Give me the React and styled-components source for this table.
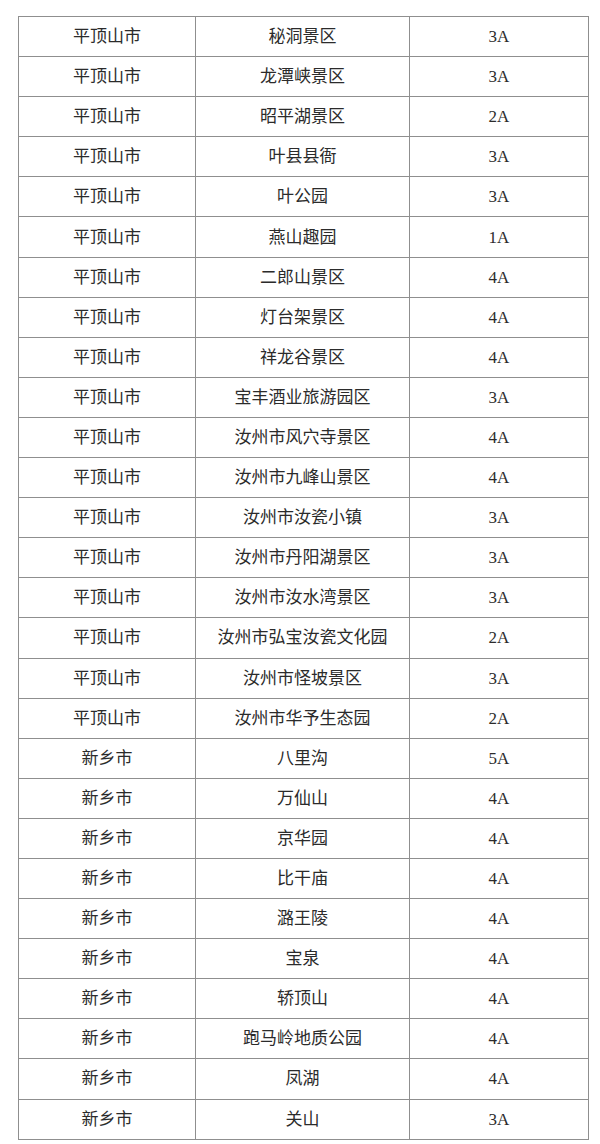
import React from 'react'
import styled, { createGlobalStyle } from 'styled-components'

const GlobalStyle = createGlobalStyle`
  html, body {
    margin: 0;
    padding: 0;
    background: #fff;
  }
`

const Page = styled.div`
  padding: 16px 0 0 18px;
  font-family: "Liberation Serif", "Noto Sans CJK SC", serif;
  color: #2b2b2b;
`

const Table = styled.table`
  border-collapse: collapse;
  table-layout: fixed;
  width: 570px;
`

const Col = styled.col`
  width: ${(p) => p.$w}px;
`

const Row = styled.tr`
  height: 40.1px;
`

const Cell = styled.td`
  border: 1px solid #8f8f8f;
  text-align: center;
  vertical-align: middle;
  font-size: 17px;
  padding: 0;
  line-height: 1;
`

const rows = [
  ['平顶山市', '秘洞景区', '3A'],
  ['平顶山市', '龙潭峡景区', '3A'],
  ['平顶山市', '昭平湖景区', '2A'],
  ['平顶山市', '叶县县衙', '3A'],
  ['平顶山市', '叶公园', '3A'],
  ['平顶山市', '燕山趣园', '1A'],
  ['平顶山市', '二郎山景区', '4A'],
  ['平顶山市', '灯台架景区', '4A'],
  ['平顶山市', '祥龙谷景区', '4A'],
  ['平顶山市', '宝丰酒业旅游园区', '3A'],
  ['平顶山市', '汝州市风穴寺景区', '4A'],
  ['平顶山市', '汝州市九峰山景区', '4A'],
  ['平顶山市', '汝州市汝瓷小镇', '3A'],
  ['平顶山市', '汝州市丹阳湖景区', '3A'],
  ['平顶山市', '汝州市汝水湾景区', '3A'],
  ['平顶山市', '汝州市弘宝汝瓷文化园', '2A'],
  ['平顶山市', '汝州市怪坡景区', '3A'],
  ['平顶山市', '汝州市华予生态园', '2A'],
  ['新乡市', '八里沟', '5A'],
  ['新乡市', '万仙山', '4A'],
  ['新乡市', '京华园', '4A'],
  ['新乡市', '比干庙', '4A'],
  ['新乡市', '潞王陵', '4A'],
  ['新乡市', '宝泉', '4A'],
  ['新乡市', '轿顶山', '4A'],
  ['新乡市', '跑马岭地质公园', '4A'],
  ['新乡市', '凤湖', '4A'],
  ['新乡市', '关山', '3A'],
]

export default function App() {
  return (
    <>
      <GlobalStyle />
      <Page>
        <Table>
          <colgroup>
            <Col $w={177} />
            <Col $w={214} />
            <Col $w={179} />
          </colgroup>
          <tbody>
            {rows.map(([city, spot, level], i) => (
              <Row key={i}>
                <Cell>{city}</Cell>
                <Cell>{spot}</Cell>
                <Cell>{level}</Cell>
              </Row>
            ))}
          </tbody>
        </Table>
      </Page>
    </>
  )
}
